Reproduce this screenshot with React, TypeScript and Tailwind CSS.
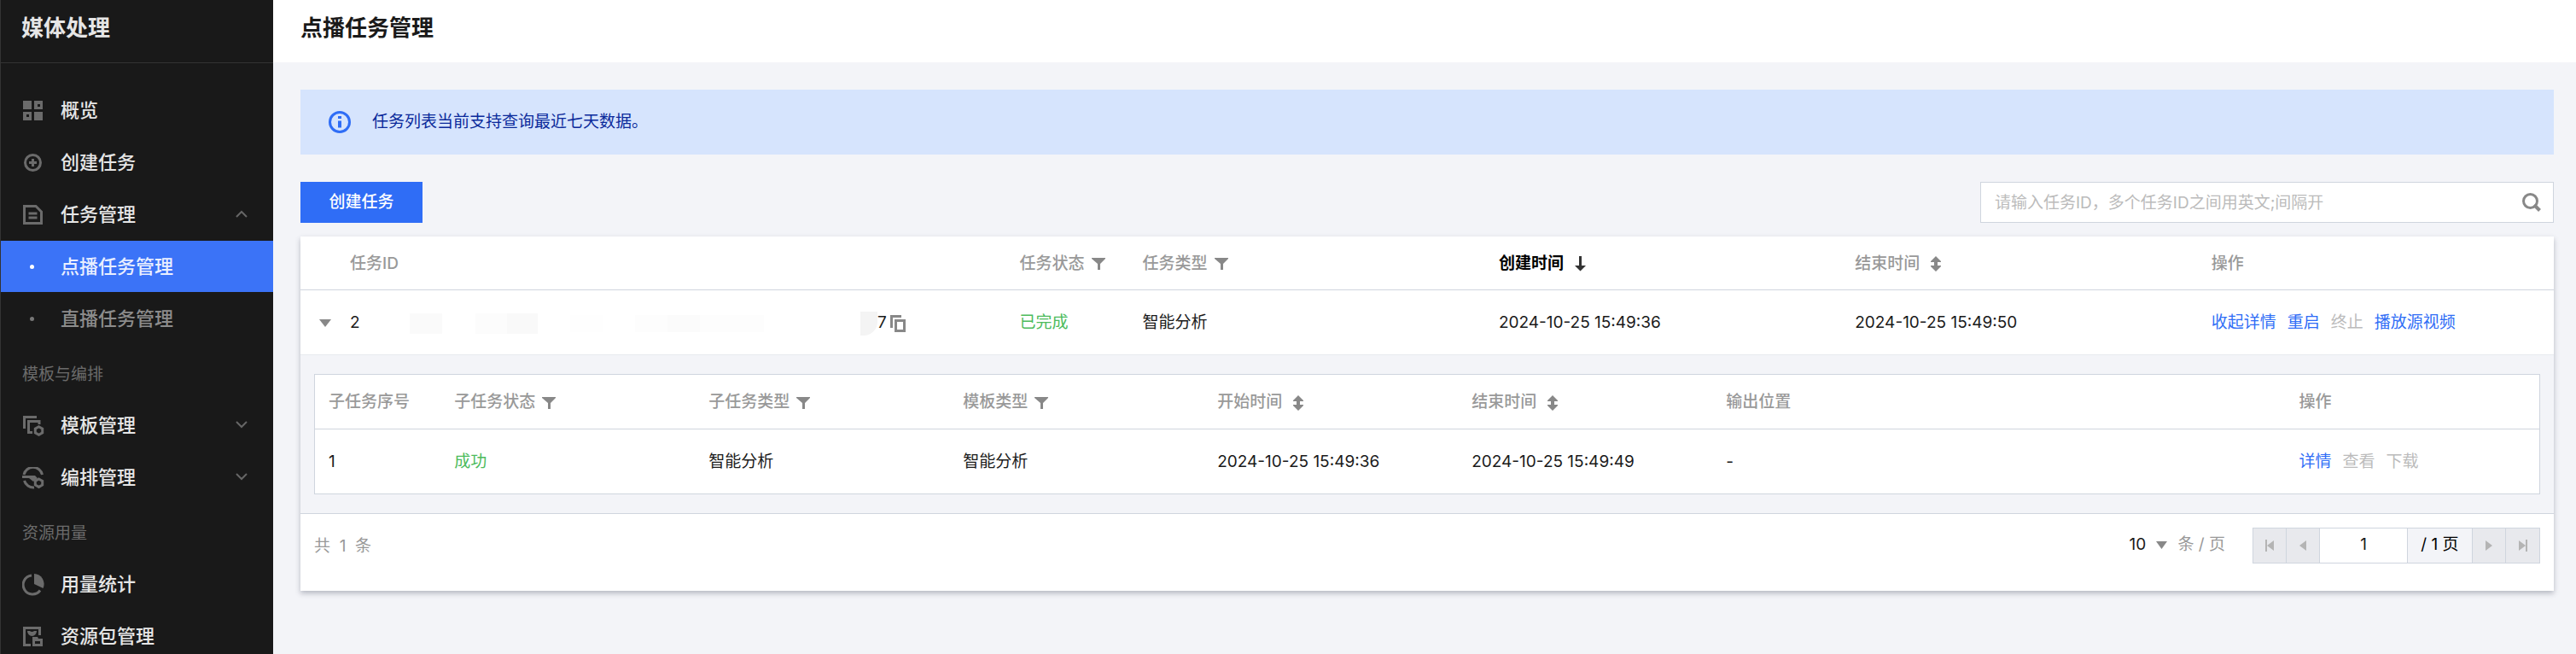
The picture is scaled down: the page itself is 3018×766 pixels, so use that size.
import type { ReactNode } from "react";

const Chevron = ({ open }: { open?: boolean }) => (
  <svg viewBox="0 0 14 14" className="w-[14px] h-[14px] shrink-0" fill="none" stroke="#666" strokeWidth="2">
    {open ? <path d="M1 9l6-6 6 6" /> : <path d="M1 2l6 6 6-6" />}
  </svg>
);

const GridIcon = () => (
  <svg viewBox="0 0 26 26" className="w-[26px] h-[26px]" fill="#6b6b6b" fillRule="evenodd">
    <path d="M1 1h10v10H1zM14 1h10v10H14zm4 4v3h3V5zM1 14h10v10H1zm4 3v3h3v-3zM14 14h10v10H14z" />
  </svg>
);

const PlusIcon = () => (
  <svg viewBox="0 0 26 26" className="w-[26px] h-[26px]" fill="none" stroke="#6b6b6b" strokeWidth="3">
    <circle cx="12.500" cy="12.500" r="9" />
    <path d="M8 12.500h9M12.500 8v9" />
  </svg>
);

const DocIcon = () => (
  <svg viewBox="0 0 26 26" className="w-[26px] h-[26px]" fill="none" stroke="#6b6b6b" strokeWidth="3">
    <path d="M2.500 2.500h13.500l6.500 6.500v13.500h-20zM7.500 11h10M7.500 16h10" />
  </svg>
);

const TemplateIcon = () => (
  <svg viewBox="0 0 26 26" className="w-[26px] h-[26px]" fill="none" stroke="#6b6b6b" strokeWidth="3">
    <path d="M2.500 16V2.500H17M7.500 21.500V7.500H20V11M6 20.500h6" />
    <path d="M19.500 13.700l4.200 2.400v4.800l-4.200 2.400-4.200-2.400v-4.800z" />
  </svg>
);

const FlowIcon = () => (
  <svg viewBox="0 0 26 26" className="w-[26px] h-[26px]" fill="none" stroke="#6b6b6b" strokeWidth="3">
    <path d="M2 9A11 11 0 0 1 23.500 9M2.500 16a11 11 0 0 0 11.500 8" />
    <path d="M0 10h15l3 3-5 4-5-4H0z" fill="#6b6b6b" stroke="none" />
    <path d="M19.500 14l4.200 2.400v4.600l-4.200 2.400-4.200-2.400v-4.600z" />
  </svg>
);

const PieIcon = () => (
  <svg viewBox="0 0 26 26" className="w-[26px] h-[26px]" fill="none" stroke="#6b6b6b" strokeWidth="3">
    <path d="M11 2a11 11 0 1 0 10 17.500" />
    <path d="M14 0a12 12 0 0 1 10.500 17L14 12z" fill="#6b6b6b" stroke="none" />
  </svg>
);

const PackageIcon = () => (
  <svg viewBox="0 0 26 26" className="w-[26px] h-[26px]" fill="none" stroke="#6b6b6b" strokeWidth="3">
    <path d="M10 22.500H2.500v-20h18V11" />
    <path d="M6 6h3a3 2.500 0 0 0 5 0h3a5.500 6 0 0 1-11 0z" fill="#6b6b6b" stroke="none" />
    <path d="M12 13h6l1 2h5v9H12zm3 5v3h6v-3z" fill="#6b6b6b" fillRule="evenodd" stroke="none" />
  </svg>
);

const FilterIcon = () => (
  <svg viewBox="0 0 16 16" className="w-4 h-4 shrink-0" fill="#888">
    <path d="M0 1h16v1L10 8v7H7V8L0 2z" />
  </svg>
);

const SortIcon = () => (
  <svg viewBox="0 0 14 18" className="w-[14px] h-[18px] shrink-0" fill="#888">
    <path d="M7 0l6 6v1H9v4h4v1l-6 6-6-6v-1h4V7H1V6z" />
  </svg>
);

const SortDownIcon = () => (
  <svg viewBox="0 0 14 18" className="w-[14px] h-[18px] shrink-0" fill="#333">
    <path d="M6 0h3v11h5l-6.500 6.500L1 11h5z" />
  </svg>
);

const CopyIcon = () => (
  <svg viewBox="0 0 20 20" className="w-5 h-5" fill="none" stroke="#888" strokeWidth="3">
    <path d="M2.500 15V1.500H14" />
    <path d="M7.500 6.500h10v12h-10z" />
  </svg>
);

type NavItem = { label: string; icon?: ReactNode; open?: boolean; collapsible?: boolean; active?: boolean };

const NAV: { title?: string; items: NavItem[] }[] = [
  {
    items: [
      { label: "概览", icon: <GridIcon /> },
      { label: "创建任务", icon: <PlusIcon /> },
      { label: "任务管理", icon: <DocIcon />, collapsible: true, open: true },
      { label: "点播任务管理", active: true },
      { label: "直播任务管理" },
    ],
  },
  {
    title: "模板与编排",
    items: [
      { label: "模板管理", icon: <TemplateIcon />, collapsible: true },
      { label: "编排管理", icon: <FlowIcon />, collapsible: true },
    ],
  },
  {
    title: "资源用量",
    items: [
      { label: "用量统计", icon: <PieIcon /> },
      { label: "资源包管理", icon: <PackageIcon /> },
    ],
  },
];

const SUB_COLUMNS = [
  { label: "子任务序号", width: "w-[5.67%]" },
  { label: "子任务状态", width: "w-[11.43%]", icon: "filter" },
  { label: "子任务类型", width: "w-[11.43%]", icon: "filter" },
  { label: "模板类型", width: "w-[11.43%]", icon: "filter" },
  { label: "开始时间", width: "w-[11.43%]", icon: "sort" },
  { label: "结束时间", width: "w-[11.43%]", icon: "sort" },
  { label: "输出位置", width: "" },
  { label: "操作", width: "w-[11.43%]" },
];

const COLUMNS = [
  { label: "任务ID", width: "" },
  { label: "任务状态", width: "w-36", icon: "filter" },
  { label: "任务类型", width: "w-[15.81%]", icon: "filter" },
  { label: "创建时间", width: "w-[15.81%]", icon: "sorted" },
  { label: "结束时间", width: "w-[15.81%]", icon: "sort" },
  { label: "操作", width: "w-[15.81%]" },
];

function HeadCell({ label, width, icon }: { label: string; width: string; icon?: string }) {
  const sorted = icon === "sorted";
  return (
    <th className={`${width} px-4 pt-[3px] text-left font-medium ${sorted ? "text-black" : "text-[#999]"}`}>
      {icon ? (
        <button className={`flex items-center ${icon === "filter" ? "gap-2" : "gap-3"} ${sorted ? "font-bold" : "font-medium"}`}>
          {label}
          {icon === "filter" && <FilterIcon />}
          {icon === "sort" && <SortIcon />}
          {sorted && <SortDownIcon />}
        </button>
      ) : (
        label
      )}
    </th>
  );
}

function Sidebar() {
  return (
    <aside className="w-80 shrink-0 bg-[#191919] border-l border-[#333]">
      <div className="h-[74px] border-b border-[#333] pl-6 pt-[13px]">
        <h2 className="text-[26px] leading-10 font-bold text-[#e6e6e6]">媒体处理</h2>
      </div>
      <nav className="pt-[25px]">
        {NAV.map((group, i) => (
          <div key={i}>
            {group.title && (
              <p className="pt-[5px] pl-[25px] text-[19px] leading-[59px] text-[#6b6b6b]">{group.title}</p>
            )}
            <ul>
              {group.items.map((item) => (
                <li key={item.label} className="pb-px">
                  <a
                    href="#"
                    className={`flex items-center h-[60px] pl-[25px] pr-[30px] pt-px text-[22px] font-medium ${
                      item.active ? "bg-[#3b73f7] text-[#e9efff]" : item.icon ? "text-[#e6e6e6]" : "text-[#8c8c8c]"
                    }`}
                  >
                    <span className="w-[45px] shrink-0">
                      {item.icon ?? (
                        <span className={`block ml-[9px] w-[5px] h-[5px] rounded-full ${item.active ? "bg-white" : "bg-[#777]"}`} />
                      )}
                    </span>
                    <span className="flex-1">{item.label}</span>
                    {item.collapsible && <Chevron open={item.open} />}
                  </a>
                </li>
              ))}
            </ul>
          </div>
        ))}
      </nav>
    </aside>
  );
}

function SubTaskTable() {
  return (
    <table className="w-full table-fixed border border-[#cfd5de] bg-white">
      <thead>
        <tr className="h-16 border-b border-[#cfd5de]">
          {SUB_COLUMNS.map((col) => (
            <HeadCell key={col.label} {...col} />
          ))}
        </tr>
      </thead>
      <tbody>
        <tr className="h-[76px]">
          <td className="px-4 pt-[3px]">1</td>
          <td className="px-4 pt-[3px] text-[#4cbb5c]">成功</td>
          <td className="px-4 pt-[3px]">智能分析</td>
          <td className="px-4 pt-[3px]">智能分析</td>
          <td className="px-4 pt-[3px]">2024-10-25 15:49:36</td>
          <td className="px-4 pt-[3px]">2024-10-25 15:49:49</td>
          <td className="px-4 pt-[3px]">-</td>
          <td className="px-4 pt-[3px]">
            <div className="flex gap-[13px]">
              <a href="#" className="text-[#2f6df6]">详情</a>
              <button disabled className="text-[#bbb]">查看</button>
              <button disabled className="text-[#bbb]">下载</button>
            </div>
          </td>
        </tr>
      </tbody>
    </table>
  );
}

// Middle of the id stays masked, only its first and last characters are readable
function MaskedId() {
  return (
    <div className="flex items-center">
      <span className="w-3">2</span>
      <span className="ml-[58px] w-[38px] h-6 bg-[#fafafa]" />
      <span className="ml-[39px] w-[37px] h-6 bg-[#fcfcfc]" />
      <span className="w-9 h-6 bg-[#f9f9f9]" />
      <span className="ml-[38px] w-[38px] h-5 bg-[#fefefe]" />
      <span className="ml-[38px] w-[38px] h-5 bg-[#fdfdfd]" />
      <span className="w-[38px] h-5 bg-[#fbfbfb]" />
      <span className="w-[75px] h-5 bg-[#fdfdfd]" />
      <span className="ml-[113px] w-5 h-7 rounded-br-2xl bg-[#f4f4f4]" />
      <span>7</span>
      <button aria-label="复制" className="ml-[3px]">
        <CopyIcon />
      </button>
    </div>
  );
}

function Pagination() {
  return (
    <div className="flex items-start justify-between h-[90px] px-4 pt-4">
      <p className="leading-[44px] text-[#999] whitespace-pre">共  1  条</p>
      <div className="flex items-center">
        <label className="flex items-center text-[#999]">
          <select className="appearance-none w-6 text-[#1a1a1a]" defaultValue="10">
            <option>10</option>
          </select>
          <svg viewBox="0 0 13 9" className="w-[13px] h-[9px] ml-2 mr-3" fill="#888">
            <path d="M0 0h13L6.500 9z" />
          </svg>
          条 / 页
        </label>
        <div className="ml-8 flex h-[42px] border border-[#cfd5de] divide-x divide-[#cfd5de] text-black">
          <button disabled aria-label="首页" className="w-[39px] flex items-center justify-center bg-[#e8e9ed]">
            <svg viewBox="0 0 12 14" className="w-3 h-[14px]" fill="#b4b4b4">
              <path d="M1 0h2v14H1zM11 1v12L3 7z" />
            </svg>
          </button>
          <button disabled aria-label="上一页" className="w-[39px] flex items-center justify-center bg-[#e8e9ed]">
            <svg viewBox="0 0 8 12" className="w-2 h-3" fill="#b4b4b4">
              <path d="M8 0v12L0 6z" />
            </svg>
          </button>
          <input aria-label="页码" defaultValue="1" className="w-[103px] bg-white text-center text-[#1a1a1a] outline-none" />
          <span className="w-[76px] flex items-center justify-center bg-[#f3f4f8]">/ 1 页</span>
          <button disabled aria-label="下一页" className="w-[39px] flex items-center justify-center bg-[#e8e9ed]">
            <svg viewBox="0 0 8 12" className="w-2 h-3" fill="#b4b4b4">
              <path d="M0 0v12l8-6z" />
            </svg>
          </button>
          <button disabled aria-label="末页" className="w-[39px] flex items-center justify-center bg-[#e8e9ed]">
            <svg viewBox="0 0 12 14" className="w-3 h-[14px]" fill="#b4b4b4">
              <path d="M9 0h2v14H9zM1 1v12l8-6z" />
            </svg>
          </button>
        </div>
      </div>
    </div>
  );
}

function App() {
  return (
    <div className="flex h-screen overflow-hidden bg-[#f3f4f8] font-['Inter','Noto_Sans_CJK_SC',sans-serif] text-[19px] text-[#1a1a1a]">
      <Sidebar />
      <main className="flex-1 min-w-0">
        <header className="h-[73px] bg-white pl-8 pt-[13px]">
          <h1 className="text-[26px] leading-10 font-bold">点播任务管理</h1>
        </header>

        <div className="pl-8 pr-[26px] pt-8">
          <div className="flex items-center h-[76px] pl-8 bg-[#d6e4fd] text-[#0b2a9b]">
            <svg viewBox="0 0 28 28" className="w-7 h-7 mr-6" fill="none" stroke="#2f6df6" strokeWidth="3">
              <circle cx="14" cy="14" r="11.500" />
              <path d="M14 12.500v8M14 7v3" strokeWidth="4" />
            </svg>
            任务列表当前支持查询最近七天数据。
          </div>

          <div className="flex justify-between mt-8">
            <button className="h-12 w-[143px] bg-[#2f6df6] font-medium text-white">创建任务</button>
            <div className="flex items-center w-[672px] h-12 border border-[#cfd5de] bg-white pl-4 pr-[14px]">
              <input
                aria-label="搜索任务"
                placeholder="请输入任务ID，多个任务ID之间用英文;间隔开"
                className="flex-1 h-full outline-none placeholder:text-[#bbb]"
              />
              <button aria-label="搜索">
                <svg viewBox="0 0 22 22" className="w-[22px] h-[22px]" fill="none" stroke="#888" strokeWidth="3">
                  <circle cx="9.500" cy="9.500" r="8" />
                  <path d="M14 14l6.500 6.500" strokeWidth="4" />
                </svg>
              </button>
            </div>
          </div>

          <section className="mt-4 bg-white shadow-[0_3px_6px_rgba(54,58,80,0.32)]">
            <table className="w-full table-fixed">
              <thead>
                <tr className="h-[62px] border-b border-[#cfd5de]">
                  <th className="w-[42px]" />
                  {COLUMNS.map((col) => (
                    <HeadCell key={col.label} {...col} />
                  ))}
                </tr>
              </thead>
              <tbody>
                <tr className="h-[76px] border-b border-[#e7eaef]">
                  <td className="pl-[22px] pt-[3px]">
                    <button aria-label="收起" className="flex">
                      <svg viewBox="0 0 14 9" className="w-[14px] h-[9px]" fill="#888">
                        <path d="M0 0h14L7 9z" />
                      </svg>
                    </button>
                  </td>
                  <td className="px-4 pt-[3px]">
                    <MaskedId />
                  </td>
                  <td className="px-4 pt-[3px] text-[#4cbb5c]">已完成</td>
                  <td className="px-4 pt-[3px]">智能分析</td>
                  <td className="px-4 pt-[3px]">2024-10-25 15:49:36</td>
                  <td className="px-4 pt-[3px]">2024-10-25 15:49:50</td>
                  <td className="px-4 pt-[3px]">
                    <div className="flex gap-[13px]">
                      <a href="#" className="text-[#2f6df6]">收起详情</a>
                      <a href="#" className="text-[#2f6df6]">重启</a>
                      <button disabled className="text-[#bbb]">终止</button>
                      <a href="#" className="text-[#2f6df6]">播放源视频</a>
                    </div>
                  </td>
                </tr>
                <tr className="border-b border-[#cfd5de] bg-[#f3f4f8]">
                  <td colSpan={7} className="px-4 py-[22px]">
                    <SubTaskTable />
                  </td>
                </tr>
              </tbody>
            </table>
            <Pagination />
          </section>
        </div>
      </main>
    </div>
  );
}

export default App;
